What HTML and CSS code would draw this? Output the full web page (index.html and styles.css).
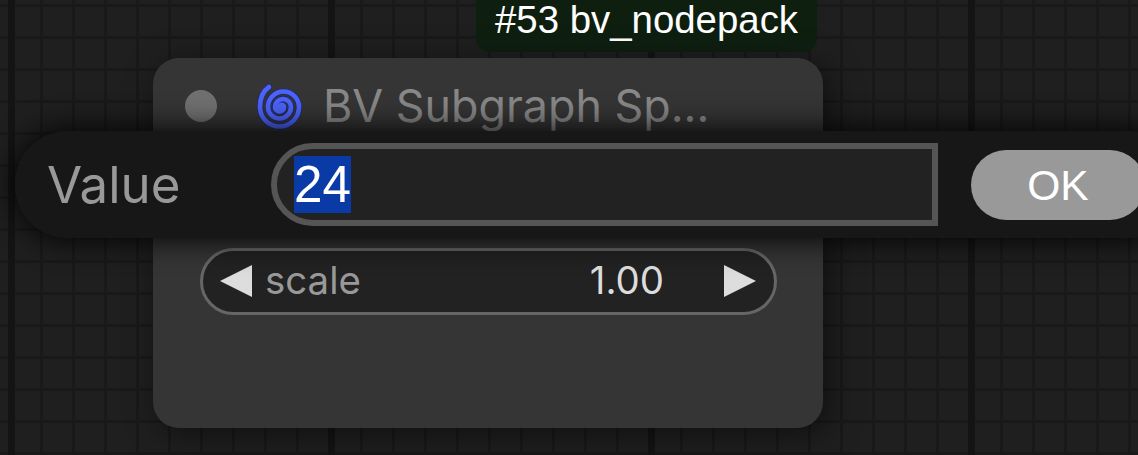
FILE: index.html
```html
<!DOCTYPE html>
<html lang="en">
<head>
  <meta charset="UTF-8" />
  <title>BV Subgraph</title>
  <link rel="stylesheet" href="styles.css">
</head>
<body>
  <div class="canvas">
    <div class="node-title">#53 bv_nodepack</div>

    <div class="node">
      <div class="node-header">
        <span class="status-dot"></span>
        <svg class="node-icon" width="48" height="48" viewBox="0 0 48 48" fill="none" stroke-linecap="round">
          <path class="spiral-edge" d="M23.5 25A2.25 2.25 0 0 1 28 25A4.5 4.5 0 0 1 19 25A8 8 0 0 1 35 25A11.5 11.5 0 0 1 12 25A15.5 15.5 0 0 1 43 25A19.5 19.5 0 0 1 4 25C4 16 7 9 13 5"/>
          <path class="spiral-top" d="M23.5 25A2.25 2.25 0 0 1 28 25A4.5 4.5 0 0 1 19 25A8 8 0 0 1 35 25A11.5 11.5 0 0 1 12 25A15.5 15.5 0 0 1 43 25A19.5 19.5 0 0 1 4 25C4 16 7 9 13 5"/>
        </svg>
        <span class="node-name">BV Subgraph Sp...</span>
      </div>
      <div class="widget">
        <span class="arrow arrow-left"></span>
        <span class="widget-label">scale</span>
        <span class="widget-value">1.00</span>
        <span class="arrow arrow-right"></span>
      </div>
    </div>

    <div class="dialog">
      <span class="dialog-label">Value</span>
      <div class="value-input"><span class="selected">24</span></div>
      <button class="ok-btn">OK</button>
    </div>
  </div>
</body>
</html>
```

FILE: styles.css
```css
* {
  margin: 0;
  padding: 0;
  box-sizing: border-box;
}

body {
  width: 1138px;
  height: 455px;
  overflow: hidden;
  background: #1f1f1f;
}

.canvas {
  position: relative;
  width: 1138px;
  height: 455px;
  overflow: hidden;
  background-color: #1f1f1f;
  background-image:
    linear-gradient(90deg, #141414 7px, transparent 7px),
    linear-gradient(90deg, #191919 3px, transparent 3px),
    linear-gradient(#191919 3px, transparent 3px);
  background-size: 320px 32px, 32px 32px, 32px 32px;
  background-position: 8px 0, 8px 0, 0 4px;
}

.node-title {
  position: absolute;
  left: 476px;
  top: 0;
  width: 341px;
  height: 52px;
  background: #0e1f10;
  border-radius: 0 0 14px 14px;
  color: #fff;
  font: 38.4px/40px "Liberation Sans", Arial, sans-serif;
  text-align: center;
}

.node {
  position: absolute;
  left: 153px;
  top: 58px;
  width: 670px;
  height: 370px;
  background: #353535;
  border-radius: 26px;
  box-shadow: 6px 6px 32px rgba(0, 0, 0, 0.5);
  font-family: Inter, sans-serif;
}

.node-header {
  display: flex;
  align-items: center;
  height: 96px;
  padding-left: 32px;
}

.status-dot {
  width: 32px;
  height: 32px;
  border-radius: 50%;
  background: #707070;
}

.node-icon {
  margin-left: 39px;
}

.spiral-edge {
  stroke: #20287c;
  stroke-width: 6;
}

.spiral-top {
  stroke: #4c64f8;
  stroke-width: 4.6;
}

.node-name {
  margin-left: 19px;
  color: #888;
  font-size: 44.8px;
  white-space: nowrap;
}

.widget {
  display: flex;
  align-items: center;
  width: 577px;
  height: 67px;
  margin: 94px 0 0 47px;
  padding: 0 18px 1px 17px;
  background: #222;
  border: 3px solid #666;
  border-radius: 34px;
  font-size: 38.4px;
}

.arrow {
  width: 0;
  height: 0;
  border-top: 16px solid transparent;
  border-bottom: 16px solid transparent;
}

.arrow-left {
  border-right: 32px solid #ddd;
}

.arrow-right {
  border-left: 32px solid #ddd;
}

.widget-label {
  margin: 0 0 3px 13px;
  color: #999;
}

.widget-value {
  margin: 0 60px 3px auto;
  color: #ddd;
}

.dialog {
  position: absolute;
  left: 15px;
  top: 131px;
  display: flex;
  align-items: center;
  width: 1170px;
  height: 107px;
  padding-left: 32px;
  background: #171717;
  border-radius: 52px;
  box-shadow: 0 0 32px #000;
}

.dialog-label {
  width: 224px;
  color: #999;
  font: 51px Inter, sans-serif;
}

.value-input {
  display: flex;
  align-items: center;
  width: 667px;
  height: 83px;
  padding-left: 17px;
  background: #222;
  border: 6px solid #555;
  border-radius: 42px 0 0 42px;
  color: #fff;
  font: 51.2px "Liberation Sans", Arial, sans-serif;
}

.selected {
  display: inline-block;
  line-height: 57px;
  background: #0a3aa6;
}

.ok-btn {
  width: 174px;
  height: 70px;
  margin-left: 33px;
  padding-top: 2px;
  background: #999;
  border: 0;
  border-radius: 35px;
  color: #fff;
  font: 42.6px "Liberation Sans", Arial, sans-serif;
}
```
